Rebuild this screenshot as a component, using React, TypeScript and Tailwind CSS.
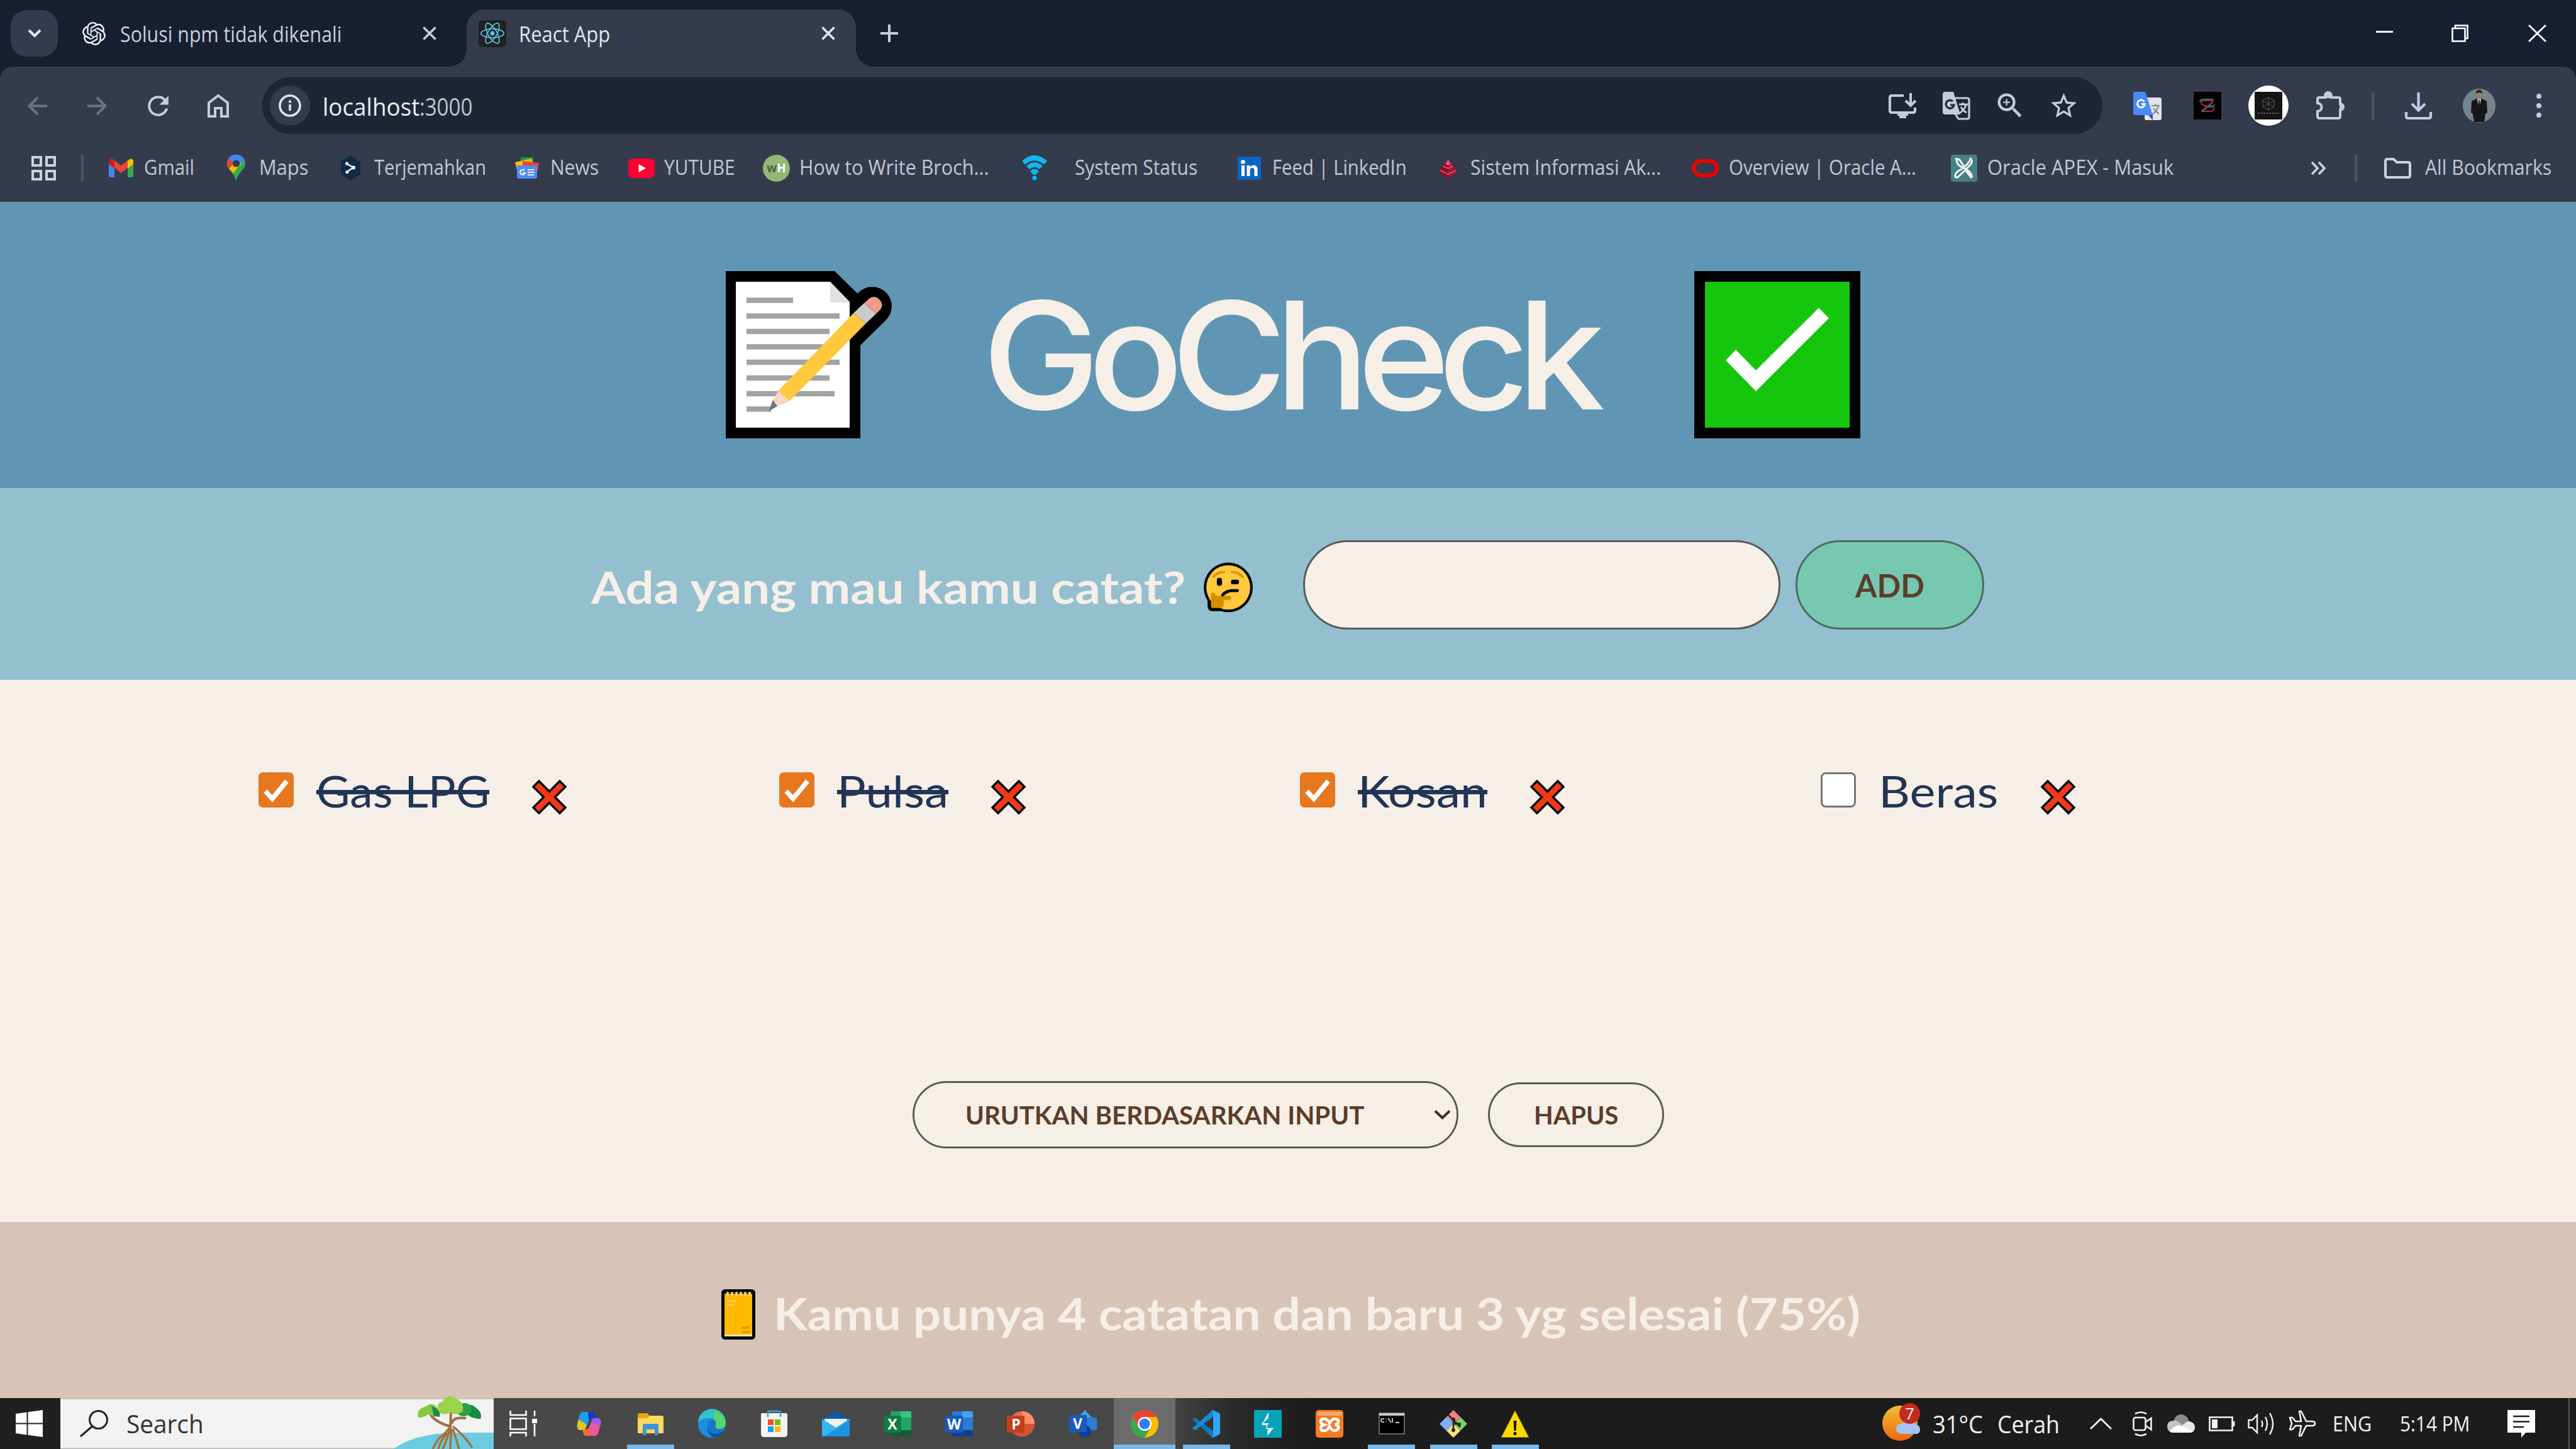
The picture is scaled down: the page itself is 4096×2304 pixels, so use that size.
import React, { useLayoutEffect, useRef, useState } from "react";
import { SiOpenai, SiReact } from "react-icons/si";
import { MdZoomIn, MdStarBorder, MdRefresh } from "react-icons/md";

type FitProps = { w: number; children: React.ReactNode; className?: string; strike?: boolean };

/* One line of text, stretched horizontally to an exact width. */
function Fit({ w, children, className = "", strike }: FitProps) {
  const ref = useRef<HTMLSpanElement>(null);
  const [k, setK] = useState(1);
  useLayoutEffect(() => {
    const measure = () => {
      if (ref.current && ref.current.offsetWidth) setK(w / ref.current.offsetWidth);
    };
    measure();
    document.fonts?.ready.then(measure);
  }, [w]);
  return (
    <span className={"relative block leading-none whitespace-nowrap " + className} style={{ width: w }}>
      <span ref={ref} className="inline-block origin-left" style={{ transform: `scaleX(${k})` }}>
        {children}
      </span>
      {strike && <span className="absolute inset-x-0 top-[33px] h-[7px] bg-[#213555]" />}
    </span>
  );
}

type IcoProps = { c: string; vb: string; children: React.ReactNode };
function Svg({ c, vb, children }: IcoProps) {
  return (
    <svg viewBox={vb} className={"block overflow-visible " + c} fill="none" preserveAspectRatio="none">
      {children}
    </svg>
  );
}

function Slot({ c, children }: { c: string; children: React.ReactNode }) {
  return <span className={"flex items-center justify-center [&>*]:shrink-0 " + c}>{children}</span>;
}

const Cross = ({ c, s = 3.5 }: { c: string; s?: number }) => (
  <Svg c={c} vb="0 0 22 22">
    <path d="M1.5 1.5 20.5 20.5M20.5 1.5 1.5 20.5" stroke="currentColor" strokeWidth={s} />
  </Svg>
);

/* ---------- Tab strip ---------- */
function TabStrip() {
  return (
    <div className="flex h-[106px] items-center bg-[#171f30] text-[#c9cede] [&>*]:shrink-0">
      <div className="ml-[17px] flex h-[74px] w-[75px] items-center justify-center rounded-[25px] bg-[#343b4e]">
        <Svg c="h-[14px] w-[22px]" vb="0 0 22 14">
          <path d="M2 2 11 11 20 2" stroke="#e6e9f2" strokeWidth="4" />
        </Svg>
      </div>
      <Slot c="ml-[38px] w-[38px]">
        <SiOpenai size={37} color="#f0f1f5" />
      </Slot>
      <Fit w={352} className="mt-[2px] ml-[23px] text-[34px]">Solusi npm tidak dikenali</Fit>
      <Cross c="ml-[129px] h-[22px] w-[22px]" />
      <div className="relative ml-[48px] flex h-[91px] w-[619px] items-center self-end rounded-t-[28px] bg-[#343b4d] pb-[15px] text-[#e3e5ee] [&>*]:shrink-0">
        <Svg c="absolute -left-[28px] bottom-0 h-[28px] w-[28px]" vb="0 0 28 28">
          <path d="M28 0V28H0A28 28 0 0 0 28 0Z" fill="#343b4d" />
        </Svg>
        <Svg c="absolute -right-[28px] bottom-0 h-[28px] w-[28px]" vb="0 0 28 28">
          <path d="M0 0V28H28A28 28 0 0 1 0 0Z" fill="#343b4d" />
        </Svg>
        <Slot c="ml-[19px] h-[43px] w-[44px] rounded-[6px] bg-[#222]">
          <SiReact size={38} color="#58c4dc" />
        </Slot>
        <Fit w={145} className="mt-[2px] ml-[20px] text-[34px]">React App</Fit>
        <Cross c="ml-[336px] h-[22px] w-[22px]" />
      </div>
      <Svg c="ml-[39px] h-[28px] w-[28px]" vb="0 0 28 28">
        <path d="M14 0V28M0 14H28" stroke="#c9cede" strokeWidth="4" />
      </Svg>
      <Svg c="ml-auto mb-[6px] h-[3px] w-[27px]" vb="0 0 27 3">
        <path d="M0 1.5H27" stroke="#fff" strokeWidth="3" />
      </Svg>
      <Svg c="ml-[93px] h-[28px] w-[27px]" vb="0 0 27 28">
        <path d="M1.5 6H21.500V26.500H1.500ZM6 6V1.500H25.500V22H21.500" stroke="#fff" strokeWidth="2.600" />
      </Svg>
      <Svg c="ml-[95px] mr-[47px] h-[28px] w-[29px]" vb="0 0 28 28">
        <path d="M1 1 27 27M27 1 1 27" stroke="#fff" strokeWidth="2.700" />
      </Svg>
    </div>
  );
}

/* ---------- Address row ---------- */
function AddressRow() {
  return (
    <div className="mt-[17px] flex h-[90px] items-center text-[#c7cbdc] [&>*]:shrink-0">
      <Svg c="ml-[43px] h-[31px] w-[32px]" vb="0 0 32 31">
        <path d="M32 15.500H4M17 2 3.500 15.500 17 29" stroke="#6c7385" strokeWidth="4" />
      </Svg>
      <Svg c="ml-[64px] h-[31px] w-[32px]" vb="0 0 32 31">
        <path d="M0 15.500H28M15 2 28.500 15.500 15 29" stroke="#6c7385" strokeWidth="4" />
      </Svg>
      <Slot c="ml-[64px] w-[33px]"><MdRefresh size={49} /></Slot>
      <Slot c="ml-[62px] w-[34px]">
        <Svg c="h-[38px] w-[34px]" vb="0 0 34 38">
          <path d="M2 14.500 17 3 32 14.500V36H22V23H12V36H2Z" stroke="currentColor" strokeWidth="4" />
        </Svg>
      </Slot>
      <div className="ml-[53px] flex h-[90px] w-[2926px] items-center rounded-full bg-[#1e2635] pr-[42px] [&>*]:shrink-0">
        <div className="ml-[12px] flex size-[64px] items-center justify-center rounded-full bg-[#343b4d]">
          <Svg c="h-[36px] w-[36px]" vb="0 0 36 36">
            <circle cx="18" cy="18" r="16" stroke="#e3e5ee" strokeWidth="3.600" />
            <path d="M18 16V26M18 9.500V13.500" stroke="#e3e5ee" strokeWidth="3.600" />
          </Svg>
        </div>
        <Fit w={154} className="ml-[20px] text-[39px] text-[#eceef5]">localhost</Fit>
        <Fit w={84} className="text-[39px] text-[#c0c4cf]">:3000</Fit>
        <Slot c="ml-auto w-[44px]">
          <Svg c="h-[40px] w-[44px]" vb="0 0 44 40">
            <path d="M24 4H5Q2 4 2 7V28Q2 31 5 31H39Q42 31 42 28V23" stroke="currentColor" strokeWidth="4" />
            <path d="M35 0V19M27 12 35 20 43 12" stroke="currentColor" strokeWidth="4" />
            <path d="M14 32H31V36H28V40H17V36H14Z" fill="currentColor" />
          </Svg>
        </Slot>
        <Svg c="ml-[42px] h-[45px] w-[44px]" vb="0 0 44 45">
          <path d="M20 10H39Q42 10 42 13V40Q42 43 39 43H25L20 35" stroke="currentColor" strokeWidth="3.200" />
          <path d="M0 4Q0 0 4 0H17L28 36H4Q0 36 0 32Z" fill="currentColor" />
          <path d="M26 20H40M32 17V20M37.500 20Q35 28 27 34M29 24Q32 30 38 33" stroke="currentColor" strokeWidth="2.800" />
          <path d="M16 15A6.500 6.500 0 1 0 18 21H12" stroke="#1e2635" strokeWidth="3.200" />
        </Svg>
        <Slot c="ml-[44px] w-[38px]"><MdZoomIn size={52} /></Slot>
        <Slot c="ml-[46px] w-[40px]"><MdStarBorder size={49} /></Slot>
      </div>
      <Svg c="ml-[49px] h-[45px] w-[45px]" vb="0 0 45 45">
        <rect x="18" y="9" width="27" height="36" rx="3" fill="#e4e4e4" />
        <path d="M24 37 31 45 31 37Z" fill="#2a45c8" />
        <path d="M0 3Q0 0 3 0H17Q19 0 20 2L31 37H3Q0 37 0 34Z" fill="#4a8af4" />
        <path d="M29 22H42M35.500 19V22M40 22Q38 31 30 36M32 26Q35 31 41 35" stroke="#7b8a92" strokeWidth="2.200" />
        <path d="M17.500 15.500A6 6 0 1 0 18.500 19.500H13" stroke="#fff" strokeWidth="2.800" />
      </Svg>
      <Svg c="ml-[51px] h-[44px] w-[44px]" vb="0 0 44 44">
        <rect width="44" height="44" fill="#060204" />
        <path d="M32 14H17Q12 14 12 17T17 22H27Q32 23 32 27T27 31H12" stroke="#b01f3a" strokeWidth="2.200" />
        <path d="M31 12H16Q10 12 10 16M31 16 13 32M33 20Q33 24 27 24H18" stroke="#1f827f" strokeWidth="2" />
        <path d="M12 30 31 15" stroke="#7d2034" strokeWidth="1.800" />
      </Svg>
      <div className="ml-[43px] flex size-[64px] items-center justify-center rounded-full bg-white shadow-md">
        <Svg c="h-[44px] w-[44px]" vb="0 0 44 44">
          <rect width="44" height="44" fill="#141414" />
          <path d="M22 9 31 14V24L22 29 13 24V14ZM13 14 31 24M31 14 13 24M22 9V29" stroke="#4c4c4c" strokeWidth="1.300" />
          <path d="M5 34H39" stroke="#5a5a5a" strokeWidth="2" strokeDasharray="3 1.500" />
        </Svg>
      </div>
      <Svg c="ml-[44px] h-[44px] w-[44px]" vb="0 0 44 44">
        <path d="M3 9H14V6A5 5 0 0 1 24 6V9H35Q38 9 38 12V19A5 5 0 0 1 38 29V39Q38 42 35 42H5Q2 42 2 39V31A6.500 6.500 0 0 0 2 18V12Q2 9 5 9" stroke="currentColor" strokeWidth="4" />
        <path d="M14 10V6A5 5 0 0 1 24 6V10ZM37 19A5 5 0 0 1 37 29Z" fill="currentColor" />
      </Svg>
      <div className="ml-[44px] h-[43px] w-[4px] bg-[#4b5568]" />
      <Svg c="ml-[49px] h-[43px] w-[43px]" vb="0 0 43 43">
        <path d="M21.500 0V28M11 18 21.500 28.500 32 18M2 31V38Q2 41 5 41H38Q41 41 41 38V31" stroke="#c3cae6" strokeWidth="4.200" />
      </Svg>
      <Svg c="ml-[49px] h-[54px] w-[52px]" vb="0 0 52 54">
        <ellipse cx="26" cy="27" rx="26" ry="27" fill="#75858c" />
        <path d="M26 3Q31 3 31 9T26 17 21 9 26 3Z" fill="#9a7b6c" />
        <path d="M21 8Q21 2 26 2T31 8Q26 4 21 8Z" fill="#1c1c1f" />
        <path d="M21 16 26 18 31 16 38 20 39 38 36 40 34 53H18L16 40 13 38 14 20Z" fill="#15161a" />
        <path d="M23 17H29L26 30Z" fill="#dfe3e6" />
        <path d="M26 18V29" stroke="#1a1a1d" strokeWidth="2" />
      </Svg>
      <Svg c="ml-[65px] h-[40px] w-[8px]" vb="0 0 8 40">
        <circle cx="4" cy="5" r="4" fill="#c3cae6" />
        <circle cx="4" cy="20" r="4" fill="#c3cae6" />
        <circle cx="4" cy="35" r="4" fill="#c3cae6" />
      </Svg>
    </div>
  );
}

/* ---------- Bookmarks ---------- */
const bookmarks = [
  {
    gap: "ml-[40px]", gap2: "ml-[17px]", w: 80, label: "Gmail",
    icon: (
      <Svg c="h-[30px] w-[39px]" vb="0 0 39 30">
        <path d="M0 5H9V30H3Q0 30 0 27Z" fill="#4285f4" />
        <path d="M30 5H39V27Q39 30 36 30H30Z" fill="#34a853" />
        <path d="M30 3Q36-2 39 3V9L30 16Z" fill="#fbbc04" />
        <path d="M0 3Q3-2 9 2V16L0 9Z" fill="#c5221f" />
        <path d="M9 3 19.500 11 30 3V15L19.500 23 9 15Z" fill="#ea4335" />
      </Svg>
    ),
  },
  {
    gap: "ml-[52px]", gap2: "ml-[22px]", w: 78, label: "Maps",
    icon: (
      <Svg c="h-[42px] w-[29px]" vb="0 0 29 42">
        <path d="M14.500 0C23 0 29 6 29 14 29 24 17 28 14.500 42 12 28 0 24 0 14 0 6 6 0 14.500 0Z" fill="#34a853" />
        <path d="M0 14Q0 9 3 5.500L10 11 3.500 23Q0 19 0 14Z" fill="#ea4335" />
        <path d="M3 22 18 8 24 12 10 29Q5 25 3 22Z" fill="#fbbc04" />
        <path d="M3 5Q7 0 14.500 0 24 0 27.500 8L18 17 9 12Z" fill="#4285f4" />
        <circle cx="14.500" cy="14" r="5.600" fill="#31394b" />
      </Svg>
    ),
  },
  {
    gap: "ml-[52px]", gap2: "ml-[22px]", w: 178, label: "Terjemahkan",
    icon: (
      <Svg c="h-[40px] w-[31px]" vb="0 0 31 40">
        <path d="M15.500 0 31 10V30L15.500 40 0 30V10Z" fill="#0f2b46" />
        <path d="M9 13 20 19.500 9 26.500" stroke="#fff" strokeWidth="2.200" />
        <circle cx="20" cy="19.500" r="3" fill="#fff" />
        <circle cx="9.500" cy="13" r="2.600" fill="#fff" />
        <circle cx="10" cy="26.500" r="2.600" fill="#fff" />
      </Svg>
    ),
  },
  {
    gap: "ml-[46px]", gap2: "ml-[18px]", w: 77, label: "News",
    icon: (
      <Svg c="h-[34px] w-[38px]" vb="0 0 38 34">
        <path d="M9 0H29V12H9Z" fill="#149b52" />
        <path d="M0 8 26 2 30 14 3 20Z" fill="#fbbc04" />
        <path d="M12 6 38 9 36 22H12Z" fill="#ea4335" />
        <path d="M3 13H35V31Q35 34 32 34H6Q3 34 3 31Z" fill="#4f8df5" />
        <path d="M15 21A4 4 0 1 0 16 25H12M20 20H30M20 24H31M20 28H30" stroke="#e8f0fe" strokeWidth="2.200" />
      </Svg>
    ),
  },
  {
    gap: "ml-[47px]", gap2: "ml-[15px]", w: 113, label: "YUTUBE",
    icon: (
      <Svg c="h-[31px] w-[42px]" vb="0 0 42 31">
        <rect width="42" height="31" rx="8" fill="#ff0033" />
        <path d="M16.500 9 28 15.500 16.500 22Z" fill="#fff" />
      </Svg>
    ),
  },
  {
    gap: "ml-[44px]", gap2: "ml-[15px]", w: 301, label: "How to Write Broch...",
    icon: (
      <span className="flex size-[43px] items-center justify-center rounded-full bg-[#93b874] text-[19px] leading-none font-bold">
        <span className="text-[#4c6b3c]">w</span>
        <span className="text-white">H</span>
      </span>
    ),
  },
  {
    gap: "ml-[53px]", gap2: "ml-[44px]", w: 195, label: "System Status",
    icon: (
      <Svg c="h-[40px] w-[40px]" vb="0 0 40 40">
        <path d="M0 9Q20-9 40 9L35 14.500Q20 2 5 14.500Z" fill="#17b4f2" />
        <path d="M7 17Q20 5 33 17L28 22Q20 15 12 22Z" fill="#10b6f6" />
        <path d="M13 25Q20 18 27 25L22 31H18Z" fill="#0eb2f4" />
        <circle cx="20" cy="36" r="3.600" fill="#00c0ff" />
      </Svg>
    ),
  },
  {
    gap: "ml-[64px]", gap2: "ml-[18px]", w: 214, label: "Feed | LinkedIn",
    icon: (
      <Svg c="h-[37px] w-[37px]" vb="0 0 37 37">
        <rect width="37" height="37" rx="2" fill="#0a66c2" />
        <circle cx="8.500" cy="8.500" r="3.300" fill="#fff" />
        <path d="M6 14H11V31H6ZM14.500 14H19.500V17Q22 13.500 25.500 13.500 31.500 13.500 31.500 21V31H26.500V22Q26.500 18 23.500 18 19.500 18 19.500 22.500V31H14.500Z" fill="#fff" />
      </Svg>
    ),
  },
  {
    gap: "ml-[50px]", gap2: "ml-[20px]", w: 303, label: "Sistem Informasi Ak...",
    icon: (
      <Svg c="h-[31px] w-[31px]" vb="0 0 31 31">
        <path d="M15.500 0 24 12 31 22 15.500 31 0 22 7 12Z" fill="#a8142f" />
        <path d="M15.500 0V31L0 22 7 12Z" fill="#8a0f28" />
        <path d="M7.500 12 15.500 16 23.500 12M3 19 15.500 25 28 19" stroke="#d7647a" strokeWidth="1.500" />
        <path d="M15.500 2 20 9 15.500 11 11 9Z" fill="#cf6578" />
      </Svg>
    ),
  },
  {
    gap: "ml-[49px]", gap2: "ml-[16px]", w: 298, label: "Overview | Oracle A...",
    icon: (
      <Svg c="h-[29px] w-[43px]" vb="0 0 43 29">
        <rect x="3" y="3" width="37" height="23" rx="11.500" stroke="#f00000" strokeWidth="6" />
      </Svg>
    ),
  },
  {
    gap: "ml-[55px]", gap2: "ml-[16px]", w: 296, label: "Oracle APEX - Masuk",
    icon: (
      <Svg c="h-[43px] w-[42px]" vb="0 0 42 43">
        <rect width="42" height="43" rx="4" fill="#468084" />
        <path d="M9 7Q9 17 20 21T34 36M31 6Q37 11 28 19L14 33Q8 39 7 34T15 24Q30 14 31 6ZM7 6 14 8 20 18M24 26 33 37" stroke="#f3f6f6" strokeWidth="3" strokeLinejoin="round" />
      </Svg>
    ),
  },
];

function BookmarksRow() {
  return (
    <div className="flex h-[108px] items-center text-[32px] text-[#c3c7d3] [&>*]:shrink-0">
      <Svg c="ml-[50px] h-[39px] w-[39px]" vb="0 0 39 39">
        <path d="M2 2H15V15H2ZM24 2H37V15H24ZM2 24H15V37H2ZM24 24H37V37H24Z" stroke="#cfd2dd" strokeWidth="4" />
      </Svg>
      <div className="ml-[40px] h-[43px] w-[4px] bg-[#4b5568]" />
      {bookmarks.map((b) => (
        <React.Fragment key={b.label}>
          <span className={b.gap}>{b.icon}</span>
          <Fit w={b.w} className={"mb-[2px] " + b.gap2}>{b.label}</Fit>
        </React.Fragment>
      ))}
      <Svg c="ml-[218px] h-[21px] w-[24px]" vb="0 0 24 21">
        <path d="M2 1 11 10.500 2 20M13 1 22 10.500 13 20" stroke="#cfd2dd" strokeWidth="3.600" />
      </Svg>
      <div className="ml-[46px] h-[43px] w-[4px] bg-[#4b5568]" />
      <Svg c="ml-[43px] h-[33px] w-[43px]" vb="0 0 43 33">
        <path d="M5 2H15L20 7H38Q41 7 41 10V28Q41 31 38 31H5Q2 31 2 28V5Q2 2 5 2Z" stroke="#cfd2dd" strokeWidth="4" />
      </Svg>
      <Fit w={201} className="mb-[2px] ml-[22px]">All Bookmarks</Fit>
    </div>
  );
}

/* ---------- App page ---------- */
function Logo() {
  return (
    <header className="flex h-[455px] items-center bg-[#6096b4] pt-[31px] [&>*]:shrink-0">
      <Svg c="ml-[1154px] h-[266px] w-[266px]" vb="1154 431 266 266">
        <path d="M1387 487 1330 543" stroke="#000" strokeWidth="62" strokeLinecap="round" />
        <path d="M1154 431H1327L1368 471V697H1154Z" fill="#000" />
        <path d="M1170 448H1320L1351 480V680H1170Z" fill="#fff" />
        <path d="M1320 448 1351 481H1320Z" fill="#e1e1e1" />
        <path
          d="M1187 477.500H1261M1187 502.500H1335M1187 527H1319M1187 551.500H1335M1187 576H1335M1187 601H1319M1187 626H1327M1187 650.500H1226"
          stroke="#a3a3a3"
          strokeWidth="8.500"
        />
        <path d="M1374 482 1383 474Q1391 469 1398 476 1406 484 1400 492L1393 499Z" fill="#f09a8a" />
        <path d="M1374 482 1393 499 1377 514 1357 498Z" fill="#cbcbcb" />
        <path d="M1357 498 1377 514 1255 638 1238 621Z" fill="#ffc83d" />
        <path d="M1238 621 1255 638 1235 647 1228 638Z" fill="#f7d7c4" />
        <path d="M1229 636 1236 646 1222 654Z" fill="#767676" />
      </Svg>
      <Fit w={972} className="ml-[142px] font-['Inter'] text-[238px] font-medium tracking-[-0.075em] text-[#f5efe7]">
        GoCheck
      </Fit>
      <Svg c="ml-auto mr-[1138px] h-[266px] w-[264px]" vb="2694 431 264 266">
        <path d="M2694 431H2958V697H2694Z" fill="#000" />
        <path d="M2711 448H2941V680H2711Z" fill="#16c60c" />
        <path d="M2760 556 2792 589 2892 489.500 2908 506 2792 622 2744 573Z" fill="#fff" />
      </Svg>
    </header>
  );
}

function ThinkingFace() {
  return (
    <Svg c="ml-[29px] mt-[8px] h-[80px] w-[78px]" vb="68 62 306 310">
      <circle cx="221" cy="217" r="153" fill="#000" />
      <path d="M92 240V330Q92 362 125 363H215V240Z" fill="#000" />
      <circle cx="221" cy="217" r="137" fill="#ffc83d" />
      <path d="M113 266Q113 250 127 250T142 266V268H222Q240 268 239 282T222 295H192V330Q190 344 172 344H125Q113 344 113 328Z" fill="#d68e00" />
      <path d="M128 151Q152 122 196 122M244 122Q284 122 310 151" stroke="#dc9609" strokeWidth="15" strokeLinecap="round" />
      <rect x="150" y="158" width="32" height="50" rx="16" fill="#000" />
      <rect x="238" y="170" width="50" height="28" rx="12" fill="#000" />
      <path d="M186 263Q212 237 246 237H278" stroke="#000" strokeWidth="19" strokeLinecap="round" />
    </Svg>
  );
}

function AddForm() {
  return (
    <section className="flex h-[305px] items-center bg-[#93bfcf] pt-[3px] font-['Lato'] font-bold [&>*]:shrink-0">
      <Fit w={945} className="ml-[940px] mt-[6px] text-[70px] text-[#f5efe7]">Ada yang mau kamu catat?</Fit>
      <ThinkingFace />
      <input className="ml-[80px] h-[142px] w-[759px] rounded-full border-[3px] border-[#5a5a5a] bg-[#f6efe8] px-[60px] text-[50px] outline-none" />
      <button className="ml-[24px] flex h-[142px] w-[300px] items-center justify-center rounded-full border-[3px] border-[#4f6a60] bg-[#76c8b1] text-[51px] text-[#5c3d2a]">
        <Fit w={110}>ADD</Fit>
      </button>
    </section>
  );
}

const items = [
  { name: "Gas LPG", w: 275, gap: "ml-[68px]", done: true },
  { name: "Pulsa", w: 177, gap: "ml-[68px]", done: true },
  { name: "Kosan", w: 206, gap: "ml-[68px]", done: true },
  { name: "Beras", w: 190, gap: "ml-[68px]", done: false },
];

function Checkbox({ on }: { on: boolean }) {
  return on ? (
    <span className="flex size-[56px] items-center justify-center rounded-[7px] bg-[#e67820]">
      <Svg c="h-[37px] w-[40px]" vb="0 0 40 37">
        <path d="M3 20 14 32 37 4" stroke="#fff" strokeWidth="7.500" />
      </Svg>
    </span>
  ) : (
    <span className="block size-[56px] rounded-[8px] border-[3px] border-[#767676] bg-white" />
  );
}

function List() {
  return (
    <section className="h-[862px] bg-[#f6efe8] pt-[147px] font-['Lato']">
      <ul className="ml-[411px] grid grid-cols-[828px_828px_828px_828px]">
        {items.map((it) => (
          <li key={it.name} className="flex h-[56px] items-center [&>*]:shrink-0">
            <Checkbox on={it.done} />
            <Fit w={it.w} strike={it.done} className="ml-[36px] mt-[2px] text-[69px] text-[#213555]">
              {it.name}
            </Fit>
            <Svg c={"mt-[22px] h-[55px] w-[55px] " + it.gap} vb="0 0 55 55">
              <path
                d="M11 2 27.500 18.500 44 2 53 11 36.500 27.500 53 44 44 53 27.500 36.500 11 53 2 44 18.500 27.500 2 11Z"
                fill="#f03a17"
                stroke="#000"
                strokeWidth="3.400"
              />
            </Svg>
          </li>
        ))}
      </ul>
      <div className="mt-[435px] ml-[1451px] flex h-[107px] items-center text-[41px] font-bold text-[#5c3d2a] [&>*]:shrink-0">
        <div className="flex h-[107px] w-[868px] items-center rounded-full border-[3px] border-[#5a5a5a] pl-[81px] [&>*]:shrink-0">
          <Fit w={634}>URUTKAN BERDASARKAN INPUT</Fit>
          <Svg c="ml-[111px] h-[15px] w-[27px]" vb="0 0 27 15">
            <path d="M2 1.500 13.500 12.500 25 1.500" stroke="#3f2c20" strokeWidth="4" />
          </Svg>
        </div>
        <button className="ml-[47px] flex h-[103px] w-[280px] items-center justify-center rounded-full border-[3px] border-[#5a5a5a]">
          <Fit w={134}>HAPUS</Fit>
        </button>
      </div>
    </section>
  );
}

function Stats() {
  return (
    <footer className="flex h-[280px] items-center bg-[#d8c4b6] pt-[13px] font-['Lato'] font-bold text-[#f5efe7] [&>*]:shrink-0">
      <Svg c="ml-[1147px] h-[80px] w-[54px]" vb="0 0 54 80">
        <rect width="54" height="80" rx="6" fill="#000" />
        <path d="M5 5H49V74H5Z" fill="#ffb900" />
        <path d="M5 72H49V75H5Z" fill="#f2e2b8" />
        <path d="M10 4V11M17 4V11M24 4V11M31 4V11M38 4V11M45 4V11" stroke="#d9d2c4" strokeWidth="2.400" />
        <path d="M5 6H49" stroke="#3a2c08" strokeWidth="3" strokeDasharray="3 4" />
        <path d="M9 19H23M9 25H20" stroke="#ffcf4f" strokeWidth="3" />
        <path d="M32 61H45M33 68H46" stroke="#e39b00" strokeWidth="4" />
      </Svg>
      <Fit w={1728} className="ml-[29px] mb-[4px] text-[70px]">Kamu punya 4 catatan dan baru 3 yg selesai (75%)</Fit>
    </footer>
  );
}

/* ---------- Taskbar ---------- */
function Office({ dark, mid, light, deep, letter, round }: { dark: string; mid: string; light: string; deep: string; letter: string; round?: boolean }) {
  return (
    <span className="relative block h-[40px] w-[44px]">
      {round ? (
        <Svg c="h-[40px] w-[44px]" vb="0 0 44 40">
          <circle cx="24" cy="20" r="20" fill={mid} />
          <path d="M24 0A20 20 0 0 1 44 20H24Z" fill={light} />
          <path d="M44 20A20 20 0 0 1 6 28L24 20Z" fill={deep} />
          <rect y="7" width="28" height="27" rx="2" fill={dark} />
        </Svg>
      ) : (
        <Svg c="h-[40px] w-[44px]" vb="0 0 44 40">
          <rect x="11" width="33" height="40" rx="2" fill={mid} />
          <path d="M27 0H42Q44 0 44 2V10H27Z" fill={light} />
          <path d="M11 30H44V38Q44 40 42 40H13Q11 40 11 38Z" fill={deep} />
          <rect y="7" width="28" height="27" rx="2" fill={dark} />
        </Svg>
      )}
      <span className="absolute top-[7px] left-0 flex h-[27px] w-[28px] items-center justify-center text-[23px] leading-none font-bold text-white">
        {letter}
      </span>
    </span>
  );
}

const apps: { id: string; mark?: "line" | "active"; icon: React.ReactNode }[] = [
  {
    id: "copilot",
    icon: (
      <Svg c="h-[38px] w-[39px]" vb="0 0 39 38">
        <path d="M10 0H24Q28 0 30 6L32 11H24Q20 11 18 17L13 29H6Q-2 29 1 19L4 7Q6 0 10 0Z" fill="#19a0e8" />
        <path d="M1 19 3 12 16 20 13 29H6Q0 29 1 19Z" fill="#e2c61e" />
        <path d="M18 0H24Q28 0 30 6L32 11H24Q20 11 19 15Z" fill="#1537c6" />
        <path d="M29 38H15Q11 38 10 31L9 28H15Q19 28 21 21L26 10H33Q40 10 38 19L35 31Q33 38 29 38Z" fill="#e85a9b" />
        <path d="M9 28H15Q19 28 20 24L22 38H15Q11 38 9 28Z" fill="#f9683c" />
        <path d="M26 10H33Q40 10 38 19L37 22 23 17Z" fill="#a35be8" />
      </Svg>
    ),
  },
  {
    id: "explorer",
    mark: "line",
    icon: (
      <Svg c="h-[36px] w-[41px]" vb="0 0 41 36">
        <path d="M0 3Q0 1 2 1H15L19 5V10H0Z" fill="#e2a413" />
        <path d="M0 9H16L19 5H39Q41 5 41 7V33H0Z" fill="#ffd75e" />
        <path d="M8 36V20Q8 18 10 18H31Q33 18 33 20V36H27V27H14V36Z" fill="#3c94dc" />
      </Svg>
    ),
  },
  {
    id: "edge",
    icon: (
      <Svg c="h-[44px] w-[44px]" vb="0 0 44 44">
        <circle cx="22" cy="22" r="22" fill="#1177cf" />
        <path d="M0 20A22 22 0 0 1 44 20Q44 30 33 30 26 29 28 24 30 15 20 13 7 12 0 20Z" fill="#35c1c9" />
        <path d="M26 1A22 22 0 0 1 44 20Q44 30 33 30 26 29 28 24 30 18 25 14Z" fill="#58d56c" />
        <path d="M15 26Q14 18 23 15 12 10 1 19-2 34 12 42 20 45 26 43 15 38 15 26Z" fill="#1b8de0" />
        <path d="M15 27Q16 37 27 38 35 38 41 33 35 44 24 43 14 39 15 27Z" fill="#0c52a0" />
      </Svg>
    ),
  },
  {
    id: "store",
    icon: (
      <Svg c="h-[42px] w-[42px]" vb="0 0 42 42">
        <path d="M11 10V3Q11 1 13 1H29Q31 1 31 3V10" stroke="#3ba7d9" strokeWidth="2.600" />
        <path d="M0 6Q0 4 2 4H40Q42 4 42 6V37Q42 42 37 42H5Q0 42 0 37Z" fill="#f4f4f4" />
        <path d="M11 10V4M31 10V4" stroke="#3ba7d9" strokeWidth="2.600" />
        <path d="M11 14H20V23H11Z" fill="#f25022" />
        <path d="M22 14H31V23H22Z" fill="#7fba00" />
        <path d="M11 25H20V34H11Z" fill="#00a4ef" />
        <path d="M22 25H31V34H22Z" fill="#ffb900" />
      </Svg>
    ),
  },
  {
    id: "mail",
    icon: (
      <Svg c="h-[40px] w-[44px]" vb="0 0 44 40">
        <path d="M22 0 44 12V20H0V12Z" fill="#0b5cad" />
        <path d="M4 12H40V22L22 30 4 22Z" fill="#f1f1f1" />
        <path d="M0 12 22 26 44 12V38Q44 40 42 40H2Q0 40 0 38Z" fill="#34b5ef" />
        <path d="M44 14 4 40H42Q44 40 44 38Z" fill="#1c94e0" />
      </Svg>
    ),
  },
  { id: "excel", icon: <Office dark="#107c41" mid="#21a366" light="#33c481" deep="#185c37" letter="X" /> },
  { id: "word", icon: <Office dark="#185abd" mid="#2b7cd3" light="#41a5ee" deep="#103f91" letter="W" /> },
  { id: "powerpoint", icon: <Office round dark="#c43e1c" mid="#ed6c47" light="#ff8f6b" deep="#d35230" letter="P" /> },
  {
    id: "visio",
    icon: (
      <span className="relative block h-[44px] w-[44px]">
        <Svg c="h-[44px] w-[44px]" vb="0 0 44 44">
          <path d="M25 0 36 12 25 24 14 12Z" fill="#41a5ee" />
          <path d="M28 12H44V32H28Z" fill="#2b7cd3" />
          <circle cx="25" cy="34" r="10" fill="#103f91" />
          <rect y="8" width="28" height="27" rx="2" fill="#185abd" />
        </Svg>
        <span className="absolute top-[8px] left-0 flex h-[27px] w-[28px] items-center justify-center text-[23px] leading-none font-bold text-white">
          V
        </span>
      </span>
    ),
  },
  {
    id: "chrome",
    mark: "active",
    icon: (
      <Svg c="h-[44px] w-[44px]" vb="0 0 44 44">
        <circle cx="22" cy="22" r="22" fill="#fbbc04" />
        <path d="M2.900 11A22 22 0 0 0 22 44L31.500 27.500 12.500 27.500Z" fill="#34a853" />
        <path d="M2.900 11A22 22 0 0 1 41.100 11H22L12.500 16.500V27.500Z" fill="#ea4335" />
        <circle cx="22" cy="22" r="11" fill="#fff" />
        <circle cx="22" cy="22" r="8.600" fill="#2f7df3" />
      </Svg>
    ),
  },
  {
    id: "vscode",
    mark: "line",
    icon: (
      <Svg c="h-[44px] w-[44px]" vb="0 0 44 44">
        <path d="M0 15 3 12 6 13 34 34V44L31 43Z" fill="#0a79c2" />
        <path d="M0 29 3 32 6 31 34 10V0L31 1Z" fill="#1a8ad4" />
        <path d="M32 0 42 4.500Q44 5.500 44 8V36Q44 38.500 42 39.500L32 44 31 43Q33 43 33 40V4Q33 1 31 1Z" fill="#2ea7f2" />
      </Svg>
    ),
  },
  {
    id: "lightning",
    icon: (
      <Svg c="h-[44px] w-[44px]" vb="0 0 44 44">
        <rect width="44" height="44" fill="#05a3b8" />
        <path d="M22.500 5V12L13 21.500H22.500L20 25.500V29H30L22 39V33L25 30H20V23.500H13L18 14Z" fill="#e9f7f9" stroke="#e9f7f9" strokeWidth="1.200" />
      </Svg>
    ),
  },
  {
    id: "xampp",
    icon: (
      <Svg c="h-[44px] w-[44px]" vb="0 0 44 44">
        <rect width="44" height="44" rx="5" fill="#f57a20" />
        <path d="M3 3H41V9H3Z" fill="#f3a876" />
        <path d="M14 14Q8 14 8 18T13 23.500Q8 25 8 29T14 33Q18 33 22 26 26 33 30 33T36 29 31 23.500Q36 22 36 18T30 14Q26 14 22 21 18 14 14 14Z" stroke="#fff" strokeWidth="4.500" />
      </Svg>
    ),
  },
  {
    id: "terminal",
    mark: "line",
    icon: (
      <Svg c="h-[35px] w-[42px]" vb="0 0 42 35">
        <rect x="1" y="1" width="40" height="33" fill="#000" stroke="#7c7c7c" strokeWidth="1.600" />
        <path d="M1 1H41V5H1Z" fill="#c9c9c9" />
        <path d="M9 10Q4 9 4 12.500T9 15M12 10V11M12 14V15M15 9 20 16M22 16V9M27 16H33" stroke="#cfcfcf" strokeWidth="1.800" />
      </Svg>
    ),
  },
  {
    id: "git",
    mark: "line",
    icon: (
      <Svg c="h-[44px] w-[44px]" vb="0 0 44 44">
        <path d="M22 0 33 11 22 22 11 11Z" fill="#f08080" />
        <path d="M33 11 44 22 33 33 22 22Z" fill="#80d060" />
        <path d="M11 11 22 22 11 33 0 22Z" fill="#80b0f8" />
        <path d="M22 22 33 33 22 44 11 33Z" fill="#ffe080" />
        <path d="M14 8 33 27M22 16V34M22 22H33" stroke="#2b2522" strokeWidth="2.600" />
        <circle cx="22" cy="15" r="3" fill="#2b2522" />
        <circle cx="31" cy="23" r="3" fill="#2b2522" />
        <circle cx="22" cy="32" r="3" fill="#2b2522" />
      </Svg>
    ),
  },
  {
    id: "warning",
    mark: "line",
    icon: (
      <Svg c="h-[44px] w-[44px]" vb="0 0 44 44">
        <path d="M22 1 44 43.500H0Z" fill="#ffd800" stroke="#8a7400" strokeWidth=".8" />
        <path d="M19.500 17H24.500L23.500 33H20.500Z" fill="#111" />
        <circle cx="22" cy="37.500" r="2.600" fill="#111" />
      </Svg>
    ),
  },
];

function Tree() {
  return (
    <Svg c="ml-auto h-[81px] w-[159px]" vb="626 2223 159 81">
      <path d="M626 2304Q660 2278 730 2278H785V2304Z" fill="#6ccbe0" />
      <path d="M684 2248Q690 2260 715 2268M717 2246 716 2272M741 2255Q720 2252 718 2264" stroke="#9c6f45" strokeWidth="4" />
      <path d="M716 2268Q712 2276 697 2288L688 2304M716 2270Q712 2286 704 2304M718 2272Q716 2290 716 2304M720 2272Q726 2290 730 2304M720 2268Q740 2284 751 2302M712 2278Q700 2290 697 2304" stroke="#a0733f" strokeWidth="3.500" />
      <path d="M665 2254Q661 2240 678 2236 684 2230 692 2235 700 2244 694 2252 686 2252 682 2248 674 2254 665 2254Z" fill="#86c844" />
      <path d="M686 2236Q702 2240 699 2253L690 2252Z" fill="#1f8a40" />
      <path d="M742 2238Q748 2230 756 2238 768 2246 764 2256 752 2256 744 2250Z" fill="#138a40" />
      <path d="M726 2236Q740 2226 749 2236 752 2250 738 2252 730 2252 726 2246Z" fill="#2aa04a" />
      <path d="M697 2244Q692 2232 704 2228 710 2216 722 2222 738 2228 736 2244 726 2252 716 2246 704 2252 697 2244Z" fill="#9bd34a" />
    </Svg>
  );
}

function Taskbar() {
  return (
    <div className="flex h-[81px] items-center bg-[linear-gradient(90deg,#484848_0px,#484848_1850px,#2a2a2a_1960px,#1c1c1c_2080px)] text-[#f2f2f2] [&>*]:shrink-0">
      <div className="flex h-[81px] w-[96px] items-center bg-[#202020] pl-[25px]">
        <Svg c="h-[43px] w-[43px]" vb="0 0 43 43">
          <path d="M0 6 17.500 3.500V20.500H0ZM19.500 3.200 43 0V20.500H19.500ZM0 22.500H17.500V39.500L0 37ZM19.500 22.500H43V43L19.500 39.800Z" fill="#fff" />
        </Svg>
      </div>
      <div className="flex h-[81px] w-[689px] items-center border-y-2 border-[#c4c4c4] bg-[#f2f2f2] text-[#333] [&>*]:shrink-0">
        <Svg c="ml-[31px] h-[43px] w-[45px]" vb="0 0 45 43">
          <circle cx="29.500" cy="15.500" r="14" stroke="#222" strokeWidth="3" />
          <path d="M19.500 26 1 42" stroke="#222" strokeWidth="3" />
        </Svg>
        <Fit w={123} className="ml-[29px] text-[40px]">Search</Fit>
        <Tree />
      </div>
      <Svg c="ml-[25px] h-[41px] w-[44px]" vb="0 0 44 41">
        <path d="M1.500 0V7H26.500V0M1.500 12.500H26.500V29.500H1.500ZM1.500 41V35H26.500V41M40 0V9M40 21V41" stroke="#fff" strokeWidth="2.600" />
        <path d="M36 13H44V20H36Z" fill="#fff" />
      </Svg>
      <div className="ml-[33px] flex h-[81px]">
        {apps.map((a) => (
          <div
            key={a.id}
            className={
              "relative flex h-[81px] w-[98.200px] items-center justify-center " + (a.mark === "active" ? "bg-[#6b6b6b]" : "")
            }
          >
            {a.icon}
            {a.mark === "line" && <span className="absolute bottom-0 left-[12px] h-[7px] w-[75px] bg-[#76b9ed]" />}
            {a.mark === "active" && <span className="absolute inset-x-0 bottom-0 h-[7px] bg-[#76b9ed]" />}
          </div>
        ))}
      </div>
      <div className="relative ml-auto h-[81px] w-[60px]">
        <Svg c="h-[81px] w-[60px]" vb="2994 2223 60 81">
          <defs>
            <linearGradient id="sun" x1="0" y1="0" x2="0" y2="1">
              <stop offset="0" stopColor="#edc234" />
              <stop offset="1" stopColor="#f2660c" />
            </linearGradient>
          </defs>
          <circle cx="3022" cy="2263" r="28" fill="url(#sun)" />
          <path d="M3026 2280Q3016 2280 3016 2272T3025 2264Q3028 2257 3037 2258 3046 2259 3047 2265 3054 2266 3054 2273T3047 2280Z" fill="#a3c4f5" />
          <circle cx="3037.500" cy="2247.500" r="16.500" fill="#c42b1c" />
        </Svg>
        <span className="absolute top-[8px] left-[27px] w-[33px] text-center text-[26px] leading-[33px]">7</span>
      </div>
      <Fit w={80} className="ml-[20px] text-[39px]">31°C</Fit>
      <Fit w={99} className="ml-[23px] text-[39px]">Cerah</Fit>
      <Svg c="ml-[48px] h-[19px] w-[35px]" vb="0 0 35 19">
        <path d="M1 18 17.500 2 34 18" stroke="#f2f2f2" strokeWidth="2.800" />
      </Svg>
      <Svg c="ml-[33px] h-[40px] w-[31px]" vb="0 0 31 40">
        <rect x="1.500" y="10" width="19" height="20" rx="3" stroke="#f2f2f2" strokeWidth="2.600" />
        <path d="M21 17 29.500 11V29L21 23M4 4Q13-1 22 4M4 36Q13 41 22 36" stroke="#f2f2f2" strokeWidth="2.600" />
      </Svg>
      <Svg c="ml-[24px] h-[29px] w-[44px]" vb="0 0 44 29">
        <path d="M10 12Q12 0 23 0 32 1 35 12L22 22Z" fill="#8c8c8c" />
        <path d="M9 29Q0 28 0 19T10 10Q16 9 22 15L30 29Z" fill="#c4c4c4" />
        <path d="M28 14Q33 9 38 12 44 14 44 21T36 29L20 20Z" fill="#e6e6e6" />
        <path d="M4 27Q14 14 24 19L41 27Q39 29 36 29H9Q6 29 4 27Z" fill="#fff" />
      </Svg>
      <Svg c="ml-[22px] h-[24px] w-[41px]" vb="0 0 41 24">
        <path d="M1.500 1.500H37.500V22.500H1.500ZM40 8V16" stroke="#f2f2f2" strokeWidth="2.600" />
        <path d="M5 5H14V19H5Z" fill="#f2f2f2" />
      </Svg>
      <Svg c="ml-[21px] h-[38px] w-[43px]" vb="0 0 43 38">
        <path d="M1.500 13H7L15 5V33L7 25H1.500Z" stroke="#f2f2f2" strokeWidth="2.400" />
        <path d="M22 14Q25 19 22 24M28 8Q34 19 28 30M35 2Q45 19 35 36" stroke="#f2f2f2" strokeWidth="2.400" />
      </Svg>
      <Svg c="ml-[22px] h-[43px] w-[43px]" vb="0 0 43 43">
        <path d="M17 2H20L28 18H37Q42 18 42 21.500T37 25H28L20 41H17L20 25H11L6 31H2L5 21.500 2 12H6L11 18H20Z" stroke="#f2f2f2" strokeWidth="2.600" strokeLinejoin="round" />
      </Svg>
      <Fit w={62} className="ml-[27px] text-[33px]">ENG</Fit>
      <Fit w={111} className="ml-[45px] text-[33px]">5:14 PM</Fit>
      <Svg c="ml-[60px] h-[44px] w-[44px]" vb="0 0 44 44">
        <path d="M0 0H44V36H29L22 44V36H0Z" fill="#fff" />
        <path d="M9 10H35M9 18.500H35M9 27H26" stroke="#1c1c1c" strokeWidth="2.600" />
      </Svg>
      <div className="mr-[10px] ml-[53px] h-[81px] w-[2px] bg-[#5a5a5a]" />
    </div>
  );
}

export default function App() {
  return (
    <div className="flex h-[2304px] w-[4096px] flex-col overflow-hidden bg-[#171f30] font-['Open_Sans',sans-serif] [&>*]:shrink-0">
      <TabStrip />
      <div className="flex h-[215px] flex-col rounded-t-[20px] bg-[#343b4d]">
        <AddressRow />
        <BookmarksRow />
      </div>
      <Logo />
      <AddForm />
      <List />
      <Stats />
      <Taskbar />
    </div>
  );
}
